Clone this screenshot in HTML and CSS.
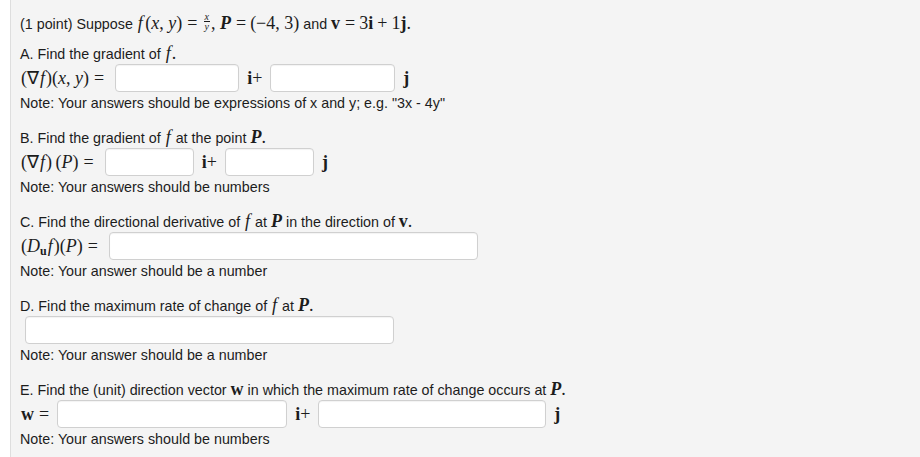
FILE: index.html
```html
<!DOCTYPE html>
<html>
<head>
<meta charset="utf-8">
<link rel="stylesheet" href="styles.css">
</head>
<body>
<div class="page">
  <div class="problem">
    <p class="intro">(1 point) Suppose <span class="m"><i class="f">f</i>&#8202;(<i>x</i>, <i>y</i>)<span class="rel">=</span><span class="frac"><span class="num"><i>x</i></span><span class="den"><i>y</i></span></span>, <b class="bi">P</b><span class="rel">=</span>(−4, 3)</span> and <span class="m"><b>v</b><span class="rel">=</span>3<b>i</b><span class="bin">+</span>1<b>j</b>.</span></p>

    <div class="part">
      <p class="title">A. Find the gradient of <span class="m"><i class="f">f</i>.</span></p>
      <div class="row">
        <span class="m lbl">(∇<i class="f">f</i>)(<i>x</i>, <i>y</i>)<span class="rel">=</span></span>
        <input class="ans wa1" type="text">
        <span class="m unit"><b>i</b>+</span>
        <input class="ans wa2" type="text">
        <span class="m unit"><b>j</b></span>
      </div>
      <p class="note">Note: Your answers should be expressions of x and y; e.g. "3x - 4y"</p>
    </div>

    <div class="part">
      <p class="title">B. Find the gradient of <span class="m"><i class="f">f</i></span> at the point <span class="m"><b class="bi">P</b>.</span></p>
      <div class="row">
        <span class="m lbl">(∇<i class="f">f</i>)&#8201;(<i>P</i>)<span class="rel">=</span></span>
        <input class="ans wb" type="text">
        <span class="m unit"><b>i</b>+</span>
        <input class="ans wb" type="text">
        <span class="m unit"><b>j</b></span>
      </div>
      <p class="note">Note: Your answers should be numbers</p>
    </div>

    <div class="part">
      <p class="title">C. Find the directional derivative of <span class="m"><i class="f">f</i></span> at <span class="m"><b class="bi">P</b></span> in the direction of <span class="m"><b>v</b>.</span></p>
      <div class="row">
        <span class="m lbl">(<i>D</i><sub><b>u</b></sub><i class="f">f</i>)(<i>P</i>)<span class="rel">=</span></span>
        <input class="ans wc" type="text">
      </div>
      <p class="note">Note: Your answer should be a number</p>
    </div>

    <div class="part">
      <p class="title">D. Find the maximum rate of change of <span class="m"><i class="f">f</i></span> at <span class="m"><b class="bi">P</b>.</span></p>
      <div class="row">
        <input class="ans wc indent" type="text">
      </div>
      <p class="note">Note: Your answer should be a number</p>
    </div>

    <div class="part">
      <p class="title">E. Find the (unit) direction vector <span class="m"><b>w</b></span> in which the maximum rate of change occurs at <span class="m"><b class="bi">P</b>.</span></p>
      <div class="row">
        <span class="m lbl lbl-e"><b>w</b><span class="rel">=</span></span>
        <input class="ans we1" type="text">
        <span class="m unit"><b>i</b>+</span>
        <input class="ans we2" type="text">
        <span class="m unit"><b>j</b></span>
      </div>
      <p class="note">Note: Your answers should be numbers</p>
    </div>
  </div>
</div>
</body>
</html>
```

FILE: styles.css
```css
html, body {
  margin: 0;
  padding: 0;
  background: #ffffff;
}

.page {
  margin-left: 10px;
  border-left: 1px solid #dedede;
  background: #f4f4f4;
  height: 457px;
  overflow: hidden;
}

.problem {
  padding-left: 9px;
  font-family: "Liberation Sans", Arial, sans-serif;
  font-size: 14.3px;
  color: #1c1c1c;
}

p {
  margin: 0;
}

.intro {
  line-height: 18px;
  height: 18px;
  padding-top: 13px;
  margin-bottom: 13px;
}

.part {
  margin-bottom: 16px;
}

.title, .note {
  line-height: 18px;
  height: 18px;
}

.row {
  display: flex;
  align-items: center;
  height: 32px;
}

.m {
  font-family: "Liberation Serif", "Times New Roman", serif;
  font-size: 18px;
  line-height: 18px;
}

.m i {
  font-style: italic;
}

.m b {
  font-weight: bold;
}

.m b.bi {
  font-style: italic;
}

.f {
  padding: 0 1px;
}

.rel {
  margin: 0 4px 0 5px;
}

.bin {
  margin: 0 4px;
}

.frac {
  display: inline-flex;
  flex-direction: column;
  align-items: center;
  vertical-align: 9px;
  font-size: 10px;
  line-height: 7px;
  margin: 0 1px 0 2px;
}

.frac .num {
  border-bottom: 1px solid #1c1c1c;
  padding: 0 1px 1px;
}

.frac .den {
  padding-top: 1px;
}

sub {
  font-size: 12px;
  vertical-align: -3px;
  line-height: 0;
}

.lbl {
  margin-left: 1px;
  margin-right: 7px;
}

.lbl-e {
  margin-right: 4px;
}

.unit {
  margin: 0 8px 0 8px;
}

.ans {
  box-sizing: border-box;
  height: 28px;
  background: #ffffff;
  border: 1px solid #d0d0d0;
  border-radius: 4px;
  box-shadow: inset 0 1px 1px rgba(0, 0, 0, 0.05);
  padding: 4px 6px;
  margin: 0;
  font-size: 14px;
}

.wa1 { width: 124px; }
.wa2 { width: 125px; }
.wb { width: 89px; }
.wc { width: 369px; }
.we1 { width: 230px; }
.we2 { width: 228px; }

.indent {
  margin-left: 5px;
}
```
